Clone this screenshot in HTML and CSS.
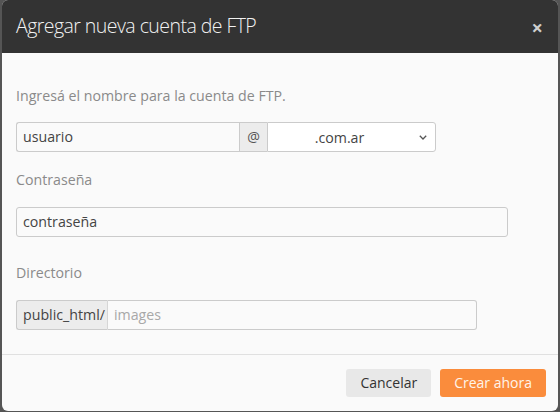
FILE: index.html
```html
<!DOCTYPE html>
<html lang="es">
<head>
<meta charset="utf-8">
<link rel="stylesheet" href="styles.css">
</head>
<body>
<div class="modal">
  <div class="modal-header">
    <h1 class="title">Agregar nueva cuenta de FTP</h1>
    <span class="close">×</span>
  </div>
  <div class="modal-body">
    <p class="hint">Ingresá el nombre para la cuenta de FTP.</p>
    <div class="group user-group">
      <div class="ctrl user">usuario</div>
      <span class="addon at">@</span>
      <div class="select">
        <span class="select-text">.com.ar</span>
        <svg class="chev" width="8" height="5" viewBox="0 0 8 5"><path d="M0.8 0.8 L4 4 L7.2 0.8" fill="none" stroke="#555" stroke-width="1.3"/></svg>
      </div>
    </div>
    <div class="label">Contraseña</div>
    <div class="ctrl pass">contraseña</div>
    <div class="label dir-label">Directorio</div>
    <div class="group dir-group">
      <span class="addon dir">public_html/</span>
      <div class="ctrl dirinput placeholder">images</div>
    </div>
  </div>
  <div class="modal-footer">
    <button class="btn cancel">Cancelar</button>
    <button class="btn primary">Crear ahora</button>
  </div>
</div>
</body>
</html>
```
FILE: styles.css
```css
html, body {
  margin: 0;
  padding: 0;
  height: 412px;
  overflow: hidden;
}
body {
  background: #555;
  font-family: "Open Sans", "DejaVu Sans", sans-serif;
  padding: 0 2px;
}
.modal {
  background: #fafafa;
  border-radius: 6px;
  height: 411px;
  overflow: hidden;
}
.modal-header {
  background: #333;
  height: 53px;
  display: flex;
  align-items: center;
  justify-content: space-between;
  padding: 0 14px;
  box-sizing: border-box;
}
.title {
  margin: 0;
  font-size: 19.5px;
  font-weight: 300;
  letter-spacing: -0.55px;
  color: #f2f2f2;
  line-height: 28px;
  margin-top: -1px;
}
.close {
  color: #cfcfcf;
  font-size: 20px;
  font-weight: 700;
  line-height: 20px;
  margin-top: 2px;
  margin-right: 1px;
}
.modal-body {
  padding: 33px 14px 24px;
}
.hint {
  margin: 0 0 16px;
  font-size: 14.2px;
  line-height: 20px;
  color: #8a8a8a;
}
.group {
  display: flex;
  height: 30px;
}
.ctrl {
  box-sizing: border-box;
  height: 30px;
  border: 1px solid #cbcbcb;
  border-radius: 3px;
  background: #fafafa;
  font-size: 14.2px;
  line-height: 28px;
  color: #444;
  padding: 0 6px;
}
.user {
  width: 223px;
  border-radius: 3px 0 0 3px;
  border-right: none;
}
.addon {
  box-sizing: border-box;
  height: 30px;
  background: #ececec;
  border: 1px solid #cbcbcb;
  font-size: 14.2px;
  line-height: 28px;
  color: #444;
}
.at {
  width: 28px;
  text-align: center;
  border-right: none;
  color: #555;
}
.select {
  box-sizing: border-box;
  width: 169px;
  height: 30px;
  background: #fff;
  border: 1px solid #cbcbcb;
  border-radius: 0 3px 3px 0;
  display: flex;
  align-items: center;
  padding: 0 8px 0 0;
}
.select-text {
  flex: 1;
  text-align: center;
  font-size: 14.2px;
  color: #444;
  padding-right: 8px;
}
.chev {
  display: block;
}
.label {
  margin: 18px 0 17px;
  font-size: 14.2px;
  line-height: 20px;
  color: #8a8a8a;
}
.dir-label {
  margin-top: 26px;
}
.pass {
  width: 492px;
}
.dir {
  padding: 0 6px;
  border-radius: 3px 0 0 3px;
  border-right: 1px solid #d6d6d6;
  width: 92px;
}
.dirinput {
  width: 369px;
  border-left: none;
  border-radius: 0 3px 3px 0;
  padding-left: 6px;
}
.placeholder {
  color: #a8a8a8;
}
.modal-footer {
  border-top: 1px solid #e0e0e0;
  display: flex;
  justify-content: flex-end;
  gap: 9px;
  padding: 14px 12px 0;
}
.btn {
  font-family: "Open Sans", "DejaVu Sans", sans-serif;
  font-size: 14px;
  height: 28px;
  border: none;
  border-radius: 3px;
  padding: 0 14px;
  line-height: 28px;
  cursor: pointer;
}
.cancel {
  background: #e8e8e8;
  color: #333;
}
.primary {
  background: #fa8c3c;
  color: #fff4ea;
}
```
